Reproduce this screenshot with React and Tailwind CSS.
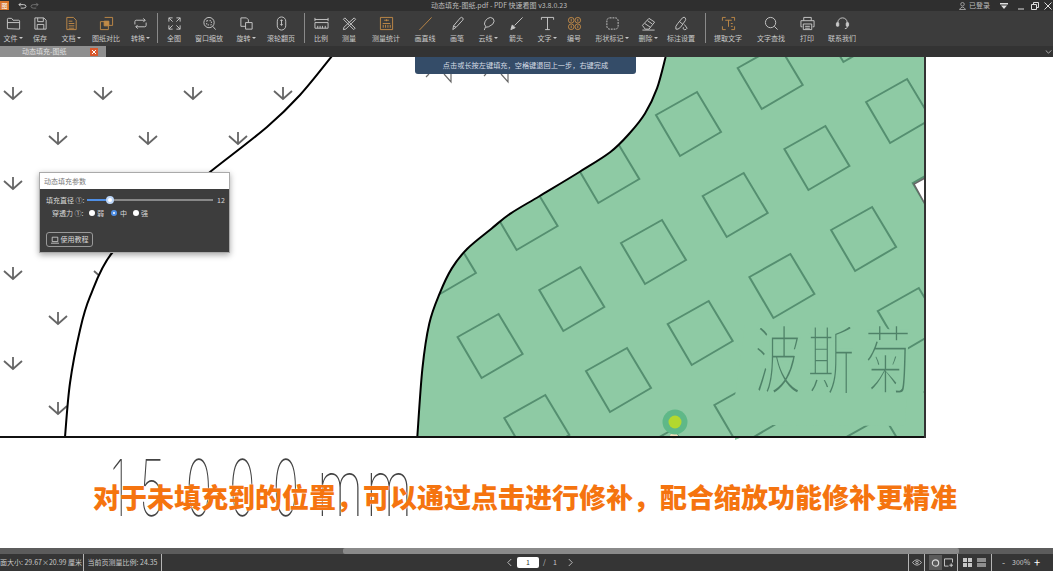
const CJK = '"Noto Sans CJK SC","Noto Sans",sans-serif'

const ORANGE = '#c08a48'

// little toolbar drawings, all on a 16x16 grid
const icons = {
  folder: <path d="M1.5 13.5v-10q0-1 1-1h3.5l1.5 2h6q1 0 1 1v8.5zM1.5 7h13" />,
  save: <path d="M2 2h9.5l2.5 2.5v9.5h-12zM5 2v4h6V2M4.5 14V9h7v5" />,
  doc: <path d="M3 1.5h7l3 3v10H3zM5 5.5h4M5 8h6M5 10.5h6M5 13h6" />,
  compare: <g><path d="M6 1.5h8.5V10H10M2 6h8v8.5H1.500V6z" /><path d="M5.500 5.500h5v5h-5z" fill="currentColor" /></g>,
  convert: <path d="M2 9V6q0-1.500 1.500-1.500H13M11 2.500l2 2-2 2M14 7v3q0 1.500-1.500 1.500H3M5 9.500l-2 2 2 2" />,
  full: <path d="M2 2l4 4M2 6V2h4M14 2l-4 4M10 2h4v4M2 14l4-4M2 10v4h4M14 14l-4-4M14 10v4h-4" />,
  zoomwin: <g><circle cx="7.500" cy="7" r="5.500" /><path d="M11.500 11l3 3.500" /><path d="M5 5h5v4.500H5z" strokeDasharray="1.500 1.500" /></g>,
  rotate: <path d="M2 2h6l2 2v3M2 2v9h5M7 7h7v7H7z" />,
  mouse: <g><rect x="3.500" y="1" width="9" height="14" rx="4.500" /><path d="M8 4v6M6.800 5.200L8 4l1.200 1.200M6.800 8.800L8 10l1.200-1.200" /></g>,
  ruler: <path d="M1 7h14v6H1zM1 2v3.500M15 2v3.500M1 3.700h14M4 10.500V13M6.500 10.500V13M9 10.500V13M12 10.500V13" />,
  measure: <path d="M3 2l11 11-1.500 1.500L1.500 3.500zM13 2l1.500 1.500L4 14l-2.500.500.500-2.500z" />,
  count: <g><path d="M1.500 1.500h13v13h-13z" /><path d="M8 3.500v2M5.500 4.500h5M4 8h8M4.500 9.500v3M7 9.500v3M9.500 9.500v3M12 9.500v3" /></g>,
  line: <path d="M1.500 15L14.500 1.500" />,
  pen: <path d="M3 14.500l.8-4L11 2q1.200-1.200 2.500 0t0 2.500L6.500 12zM3.800 10.500l2.700 1.500" />,
  cloud: <path d="M3.500 15l1.500-4q-2.500-2-.5-5.500T10 1.500q4 .5 4 4T8 11.500l-3 .5" />,
  arrow: <g><path d="M14.500 1.500L6 10" /><path d="M2 14.500l1.500-5 3 3z" fill="currentColor" /></g>,
  text: <path d="M1.500 4V1.500h13V4M8 1.500v13M5.500 14.500h5" />,
  number: <g><circle cx="4.500" cy="4.500" r="3" /><circle cx="11.500" cy="4.500" r="3" /><circle cx="4.500" cy="11.500" r="3" /><circle cx="11.500" cy="11.500" r="3" /><path d="M4.500 3v3M11.500 3v3M4.500 10v3M11.500 10v3" /></g>,
  shape: <rect x="2" y="2" width="12" height="12" rx="3" strokeDasharray="2 1" />,
  eraser: <path d="M1.500 10l7-7.500 6 4-6 7.500h-4zM4 8l6 4M7 5l5 3.500M1.500 15h13" />,
  markset: <path d="M2 14q-1-3 2-6l5-6q2-1.500 3 0t0 3L7 12q-3 3-5 2zM6 6l3.500 3M11 9l3 4q-1 2-3 1.500T10 12" />,
  extract: <g><path d="M5 1.500H1.500V5M11 1.500h3.500V5M5 14.500H1.500V11M11 14.500h3.500V11" /><path d="M4.500 4.500h7M8 4.500v7M10.500 8h2M10.500 11h2" /></g>,
  search: <g><circle cx="7" cy="7" r="5.500" /><path d="M11 11l3.500 3.500" /></g>,
  print: <path d="M4 5V1.500h8V5M2.500 11.500H1V5h14v6.500h-1.500M3.500 8.500h9v6h-9zM5.500 11h5M5.500 13h5" />,
  headset: <g><path d="M3 8V7a5 5 0 0 1 10 0v5q0 1.500-2.500 1.500" /><rect x="1.500" y="7" width="2.500" height="4" rx="1" fill="currentColor" /><rect x="12" y="7" width="2.500" height="4" rx="1" fill="currentColor" /></g>,
}

function Icon({ name, orange }){
  return (
    <svg viewBox="0 0 16 16" fill="none" stroke="currentColor" strokeWidth="1" className="w-[15px] h-[15px]" style={orange ? { color: ORANGE } : undefined}>
      {icons[name]}
    </svg>
  )
}

const tools = [
  { label: '文件', icon: 'folder', caret: true, w: 'w-[26px]' },
  { label: '保存', icon: 'save', w: 'w-[28px]' },
  { label: '文档', icon: 'doc', caret: true, orange: true, w: 'w-[34px]' },
  { label: '图纸对比', icon: 'compare', orange: true, w: 'w-[36px]' },
  { label: '转换', icon: 'convert', caret: true, w: 'w-[33px]' },
  { sep: true },
  { label: '全图', icon: 'full', w: 'w-[32px]' },
  { label: '窗口缩放', icon: 'zoomwin', w: 'w-[38px]' },
  { label: '旋转', icon: 'rotate', caret: true, w: 'w-[36px]' },
  { label: '滚轮翻页', icon: 'mouse', w: 'w-[34px] mr-[6px]' },
  { sep: true },
  { label: '比例', icon: 'ruler', w: 'w-[32px]' },
  { label: '测量', icon: 'measure', w: 'w-[24px]' },
  { label: '测量统计', icon: 'count', orange: true, w: 'w-[50px]' },
  { label: '画直线', icon: 'line', orange: true, w: 'w-[28px]' },
  { label: '画笔', icon: 'pen', w: 'w-[36px]' },
  { label: '云线', icon: 'cloud', caret: true, w: 'w-[26px]' },
  { label: '箭头', icon: 'arrow', w: 'w-[30px]' },
  { label: '文字', icon: 'text', caret: true, w: 'w-[32px]' },
  { label: '编号', icon: 'number', orange: true, w: 'w-[22px]' },
  { label: '形状标记', icon: 'shape', caret: true, w: 'w-[54px]' },
  { label: '删除', icon: 'eraser', caret: true, w: 'w-[18px]' },
  { label: '标注设置', icon: 'markset', w: 'w-[48px]' },
  { sep: true },
  { label: '提取文字', icon: 'extract', orange: true, w: 'w-[44px]' },
  { label: '文字查找', icon: 'search', w: 'w-[42px]' },
  { label: '打印', icon: 'print', w: 'w-[30px]' },
  { label: '联系我们', icon: 'headset', w: 'w-[40px]' },
]

// catmull-rom through the traced points of the boundary
function smooth(pts){
  let d = `M${pts[0][0]} ${pts[0][1]}`
  for(let i = 0; i < pts.length - 1; i++){
    const p0 = pts[i-1] || pts[i], p1 = pts[i], p2 = pts[i+1], p3 = pts[i+2] || p2
    d += ` C${p1[0]+(p2[0]-p0[0])/6} ${p1[1]+(p2[1]-p0[1])/6} ${p2[0]-(p3[0]-p1[0])/6} ${p2[1]-(p3[1]-p1[1])/6} ${p2[0]} ${p2[1]}`
  }
  return d
}

const greenEdge = [[665.6,57],[657,88.4],[645,113.5],[629.4,133.5],[610.4,152],[579.4,172],[539.7,196],[510.4,213.6],[491.4,228.7],[467.3,248.7],[451.8,268.4],[439.7,293.4],[429.3,323.5],[422.4,368.6],[417.3,437]]
const leftEdge = [[332,56],[300,95],[267,127],[210,172],[160,212],[112,253],[90,296.7],[80,330],[70,383],[65,437]]
const greenPath = smooth(greenEdge) + ' L925 437 L925 57 Z'

const squares = []
for(let i = -3; i < 5; i++){
  for(let j = -2; j < 6; j++){
    const x = 688.5 + i*81.7 + j*46.7, y = 124 - i*47 + j*81
    if(x > 380 && x < 980 && y > 20 && y < 480) squares.push([x, y])
  }
}

const arrows = [[13,87],[103,87],[193,87],[283,87],[58,132],[148,132],[238,132],[13,177],[13,267],[103,267],[58,312],[13,357],[58,402]]

function Drawing(){
  return (
    <svg viewBox="0 57 1053 491" className="block w-[1053px] h-[491px]">
      <defs>
        <clipPath id="green"><path d={greenPath} /></clipPath>
        <clipPath id="left"><path d={smooth(leftEdge) + ' L0 437 L0 57 Z'} /></clipPath>
      </defs>
      <g clipPath="url(#left)" fill="none" stroke="#666666" strokeWidth="1.800">
        {arrows.map(([x,y]) => <path key={x+'-'+y} d={`M${x} ${y}V${y+12}M${x-9} ${y+4}L${x} ${y+12}L${x+9} ${y+4}`} />)}
      </g>
      <path d="M444 74L451 82V74M501 74L508 82V74M429 74L426 77M486 74L484 76" fill="none" stroke="#6b6b6b" strokeWidth="1.200" />
      <path d={greenPath} fill="#8ecaa4" />
      <g clipPath="url(#green)" fill="none" stroke="#558f70" strokeWidth="2">
        {squares.map(([x,y]) => <path key={x} d={`M${x-32.5} ${y-9}L${x+8.5} ${y-32}L${x+32.5} ${y+8}L${x-8.5} ${y+32}Z`} />)}
      </g>
      <path d="M745 325L884 325L909 352L905 426L772 425L735 440L735 396Z" fill="#8ecaa4" />
      <path d="M925 178L914 184L925 204Z" fill="#fff" stroke="#666" strokeWidth="1.500" />
      <text transform="translate(754 388) scale(0.95 1.5)" x="0 56 116" fontSize="50" fontFamily={CJK} fill="#4f8268" stroke="#8ecaa4" strokeWidth="2.200">波斯菊</text>
      <ellipse cx="674" cy="436" rx="4" ry="2.500" fill="#f0dcb8" />
      <circle cx="675" cy="422" r="12.500" fill="#5fb888" />
      <circle cx="675" cy="422" r="6.500" fill="#b3d82f" />
      <path d={smooth(greenEdge)} fill="none" stroke="#000" strokeWidth="2" />
      <path d={smooth(leftEdge)} fill="none" stroke="#000" strokeWidth="2" />
      <path d="M0 437H925" stroke="#111" strokeWidth="2" />
      <path d="M925 57V438" stroke="#333" strokeWidth="2" />
      <text transform="translate(0 516) scale(0.58 1)" x="190 240 320 395 470" fontSize="78" fontWeight="100" fontFamily="Inter,sans-serif" fill="#444">15000</text>
      <text transform="translate(0 516) scale(0.7 1)" x="452 522" fontSize="78" fontWeight="100" fontFamily="Inter,sans-serif" fill="#444">mm</text>
    </svg>
  )
}

function Panel(){
  return (
    <div className="absolute left-[39px] top-[115px] w-[191px] h-[81px] flex flex-col border border-[#aaaaaa] shadow-[0_2px_6px_rgba(0,0,0,0.35)] text-[7px] text-[#d8d8d8]">
      <div className="h-[16px] bg-white text-[#777777] pl-[4px] flex items-center">动态填充参数</div>
      <div className="flex-1 bg-[#3d3d3d] pl-[6px] flex flex-col">
        <div className="flex items-center mt-[6px] h-[10px]">
          <span className="w-[41px] whitespace-nowrap">填充直径 ①:</span>
          <div className="relative w-[126px] h-[2px] bg-[#888888]">
            <div className="w-[23px] h-[2px] bg-[#4f8fe6]" />
            <div className="absolute left-[19px] top-[-3px] w-[8px] h-[8px] rounded-full bg-white border-2 border-[#bcd6f8]" />
          </div>
          <span className="ml-[4px]">12</span>
        </div>
        <div className="flex items-center mt-[3px] h-[10px]">
          <span className="w-[41px] pl-[6px] whitespace-nowrap">穿透力 ①:</span>
          <span className="w-[6px] h-[6px] rounded-full bg-white ml-[2px]" />
          <span className="ml-[2px] w-[14px]">弱</span>
          <span className="w-[6px] h-[6px] rounded-full bg-white border-2 border-[#4f8fe6]" />
          <span className="ml-[3px] w-[13px]">中</span>
          <span className="w-[6px] h-[6px] rounded-full bg-white" />
          <span className="ml-[2px]">强</span>
        </div>
        <div className="mt-[14px] w-[47px] h-[15px] border border-[#999999] rounded-[3px] flex items-center justify-center gap-[2px]">
          <svg viewBox="0 0 10 10" className="w-[8px] h-[8px]" fill="none" stroke="#d8d8d8" strokeWidth="1"><path d="M1.500 1.500h7v5.500h-7zM0 9h10" /></svg>
          <span>使用教程</span>
        </div>
      </div>
    </div>
  )
}

function StatusBar(){
  return (
    <div className="h-[17px] bg-[#353535] flex items-center text-[7px] text-[#c8c8c8] relative">
      <div className="w-[84px] h-full border-r border-[#b5b5b5] flex items-center justify-end pr-[1px] whitespace-nowrap">页面大小: 29.67×20.99 厘米</div>
      <div className="w-[78px] h-full border-r border-[#b5b5b5] flex items-center justify-center whitespace-nowrap">当前页测量比例: 24.35</div>
      <div className="ml-[344px] flex items-center h-full">
        <svg viewBox="0 0 8 10" className="w-[7px] h-[9px]" fill="none" stroke="#c8c8c8"><path d="M6 1L2 5l4 4" /></svg>
        <div className="ml-[4px] w-[22px] h-[11px] bg-white rounded-[2px] text-[#333333] flex items-center justify-center">1</div>
        <span className="ml-[4px] w-[10px]">/</span>
        <span className="w-[14px]">1</span>
        <svg viewBox="0 0 8 10" className="w-[7px] h-[9px]" fill="none" stroke="#c8c8c8"><path d="M2 1l4 4-4 4" /></svg>
      </div>
      <div className="ml-auto flex items-center h-full">
        <div className="w-[16px] h-full border-l border-[#b5b5b5] flex items-center justify-center">
          <svg viewBox="0 0 12 8" className="w-[10px] h-[7px]" fill="none" stroke="#c8c8c8"><path d="M.5 4Q6-2.500 11.500 4 6 10.500.5 4z" /><circle cx="6" cy="4" r="1.500" /></svg>
        </div>
        <div className="w-[34px] h-full border-x border-[#b5b5b5] flex items-center pl-[4px] gap-[2px]">
          <div className="w-[13px] h-[15px] bg-[#5a5a5a] flex items-center justify-center">
            <svg viewBox="0 0 10 10" className="w-[9px] h-[9px]" fill="none" stroke="#d8d8d8" strokeWidth="1.300"><circle cx="5" cy="5.500" r="3.500" /></svg>
          </div>
          <svg viewBox="0 0 10 10" className="w-[9px] h-[9px]" fill="none" stroke="#d8d8d8"><path d="M9.500 5V1H.500v8H5M6 8h4M8 6v4" /></svg>
        </div>
        <div className="w-[34px] h-full border-r border-[#b5b5b5] flex items-center justify-center gap-[5px]">
          <svg viewBox="0 0 9 9" className="w-[9px] h-[9px]" fill="#c8c8c8"><path d="M0 0h4v4H0zM5 0h4v4H5zM0 5h4v4H0zM5 5h4v4H5z" /></svg>
          <svg viewBox="0 0 9 9" className="w-[9px] h-[9px]" fill="#8f8f8f"><path d="M0 0h9v4H0zM0 5h9v4H0z" /></svg>
        </div>
        <div className="w-[61px] flex items-center pl-[10px]">
          <span className="w-[10px] text-[9px]">-</span>
          <span className="w-[22px]">300%</span>
          <span className="text-[11px] leading-none text-white">+</span>
        </div>
      </div>
    </div>
  )
}

export default function App(){
  return (
    <div className="w-[1053px] h-[571px] flex flex-col overflow-hidden bg-white" style={{ fontFamily: CJK }}>
      {/* title bar */}
      <div className="h-[11px] bg-[#2f2f2f] relative flex items-center text-[7px] text-[#bdbdbd]">
        <div className="w-[9px] h-[9px] bg-[#d9752c] text-[6px] text-white flex items-center justify-center">图</div>
        <svg viewBox="0 0 10 8" className="ml-[9px] w-[9px] h-[7px]" fill="none" stroke="#dddddd"><path d="M3 1L1 3l2 2M1 3h5q3 0 3 2t-3 2H3" /></svg>
        <svg viewBox="0 0 10 8" className="ml-[3px] w-[9px] h-[7px]" fill="none" stroke="#777777"><path d="M7 1l2 2-2 2M9 3H4Q1 3 1 5t3 2h3" /></svg>
        <span className="ml-[392px] whitespace-nowrap">动态填充-图纸.pdf - PDF 快速看图 v3.8.0.23</span>
        <div className="ml-auto flex items-center">
          <svg viewBox="0 0 8 9" className="w-[7px] h-[8px]" fill="none" stroke="#aaaaaa"><circle cx="4" cy="2.500" r="2" /><path d="M.5 8.500Q4 3 7.500 8.500z" /></svg>
          <span className="ml-[3px] w-[31px]">已登录</span>
          <svg viewBox="0 0 8 6" className="w-[8px] h-[6px]" fill="#dddddd"><path d="M0 0h8v1.500H0zM1 2.500h6L4 6z" /></svg>
          <svg viewBox="0 0 8 8" className="ml-[9px] w-[8px] h-[8px]" stroke="#dddddd"><path d="M1 7h6" /></svg>
          <svg viewBox="0 0 8 8" className="ml-[6px] w-[8px] h-[8px]" fill="none" stroke="#dddddd"><path d="M.5 2.500h5v5h-5zM2.500 2.500v-2h5v5h-2" /></svg>
          <svg viewBox="0 0 8 8" className="ml-[5px] mr-[1px] w-[8px] h-[8px]" stroke="#dddddd"><path d="M.5.5l7 7M7.500.5l-7 7" /></svg>
        </div>
      </div>

      {/* toolbar */}
      <div className="h-[35px] bg-[#3c3c3c] flex items-stretch">
        {tools.map((t, i) => t.sep ? (
          <div key={i} className="w-[1px] h-[30px] mt-[2px] bg-[#8a8a8a]" />
        ) : (
          <div key={i} className={`${t.w} flex flex-col items-center pt-[5px] text-[#c9c9c9]`}>
            <Icon name={t.icon} orange={t.orange} />
            <div className="mt-[2px] text-[7px] leading-[10px] whitespace-nowrap flex items-center">
              {t.label}
              {t.caret && <span className="ml-[1px] w-0 h-0 border-x-[2px] border-x-transparent border-t-[2px] border-t-[#c9c9c9]" />}
            </div>
          </div>
        ))}
      </div>

      {/* tabs */}
      <div className="h-[11px] bg-[#333333] flex items-center relative">
        <div className="w-[106px] h-full bg-[#8f8f8f] flex items-center pl-[22px] text-[7px] text-[#e0e0e0]">
          <span className="w-[68px] whitespace-nowrap">动态填充-图纸</span>
          <svg viewBox="0 0 8 8" className="w-[8px] h-[8px]"><path d="M0 0h8v8H0z" fill="#d9582c" /><path d="M2 2l4 4M6 2L2 6" stroke="#fff" /></svg>
        </div>
        <svg viewBox="0 0 8 5" className="ml-auto mr-[1px] w-[7px] h-[4px]" fill="none" stroke="#c8c8c8"><path d="M.5.5L4 4 7.500.5" /></svg>
      </div>

      {/* canvas */}
      <div className="relative flex-1 overflow-hidden">
        <Drawing />
        <div className="absolute left-[415px] top-0 w-[221px] h-[17px] bg-[#344c68] rounded-b-[3px] flex items-center justify-center text-[7.2px] text-[#d5dce5] whitespace-nowrap">
          点击或长按左键填充，空格键退回上一步，右键完成
        </div>
        <Panel />
        <div className="absolute left-[93px] top-[424px] text-[27px] leading-[32px] font-black text-[#f5740f] whitespace-nowrap [text-shadow:0_0_2px_#ffffff]">
          对于未填充到的位置，可以通过点击进行修补，配合缩放功能修补更精准
        </div>
      </div>

      {/* scrollbar */}
      <div className="h-[6px] bg-[#5c5c5c] flex">
        <div className="ml-[343px] w-[616px] h-full bg-[#8a8a8a] rounded-[2px]" />
      </div>

      <StatusBar />
    </div>
  )
}
